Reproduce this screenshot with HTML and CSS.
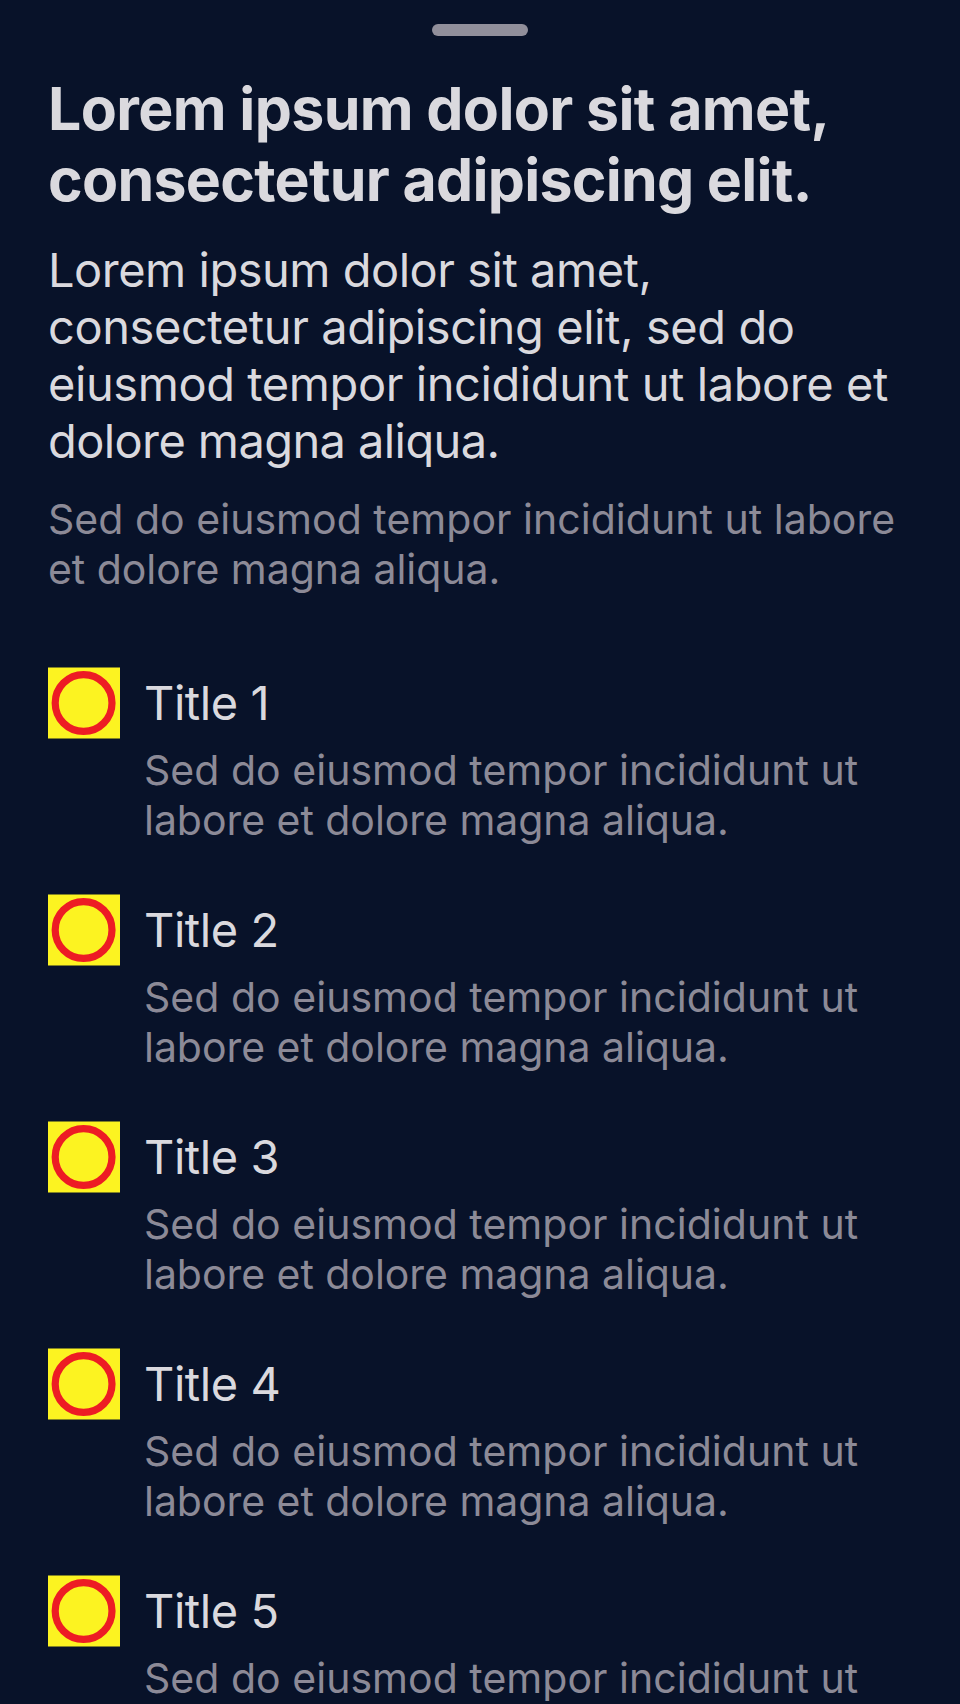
FILE: index.html
```html
<!DOCTYPE html>
<html lang="la">
<head>
<meta charset="utf-8">
<title>Lorem ipsum</title>
<link rel="stylesheet" href="styles.css">
</head>
<body>
<main class="sheet">
  <div class="grabber"></div>
  <h1 class="heading"><span class="wide">Lorem ipsum dolor sit amet,</span><br>consectetur adipiscing elit.</h1>
  <p class="lead"><span class="lead-first">Lorem ipsum dolor sit amet,</span><br>consectetur adipiscing elit, sed do<br>eiusmod tempor incididunt ut labore et<br><span class="lead-last">dolore magna aliqua.</span></p>
  <p class="note">Sed do eiusmod tempor incididunt ut labore<br><span class="tight">et dolore magna aliqua.</span></p>
  <ul class="list">
    <li class="item"><svg class="icon" viewBox="0 0 72 72"><rect y="0.5" width="72" height="71"/><circle cx="35.6" cy="36" r="28.4"/></svg><div><h2 class="title">Title 1</h2><p class="text">Sed do eiusmod tempor incididunt ut<br><span class="tight">labore et dolore magna aliqua.</span></p></div></li>
    <li class="item"><svg class="icon" viewBox="0 0 72 72"><rect y="0.5" width="72" height="71"/><circle cx="35.6" cy="36" r="28.4"/></svg><div><h2 class="title">Title 2</h2><p class="text">Sed do eiusmod tempor incididunt ut<br><span class="tight">labore et dolore magna aliqua.</span></p></div></li>
    <li class="item"><svg class="icon" viewBox="0 0 72 72"><rect y="0.5" width="72" height="71"/><circle cx="35.6" cy="36" r="28.4"/></svg><div><h2 class="title">Title 3</h2><p class="text">Sed do eiusmod tempor incididunt ut<br><span class="tight">labore et dolore magna aliqua.</span></p></div></li>
    <li class="item"><svg class="icon" viewBox="0 0 72 72"><rect y="0.5" width="72" height="71"/><circle cx="35.6" cy="36" r="28.4"/></svg><div><h2 class="title">Title 4</h2><p class="text">Sed do eiusmod tempor incididunt ut<br><span class="tight">labore et dolore magna aliqua.</span></p></div></li>
    <li class="item"><svg class="icon" viewBox="0 0 72 72"><rect y="0.5" width="72" height="71"/><circle cx="35.6" cy="36" r="28.4"/></svg><div><h2 class="title">Title 5</h2><p class="text">Sed do eiusmod tempor incididunt ut</p></div></li>
  </ul>
</main>
</body>
</html>
```
FILE: styles.css
```css
* { box-sizing: border-box; margin: 0; padding: 0; }
body { background: #081229; font-family: Inter, "Liberation Sans", sans-serif; }
.sheet { height: 1704px; overflow: hidden; padding: 24px 48px 0; white-space: nowrap; }
.grabber { width: 96px; height: 12px; margin: 0 auto; border-radius: 6px; background: #918f9b; }
.heading { margin-top: 37px; font-size: 59px; line-height: 71px; font-weight: 700; letter-spacing: -0.72px; color: #dad9de; }
.wide { letter-spacing: -0.63px; }
.lead { margin-top: 26px; font-size: 47px; line-height: 57px; letter-spacing: -0.42px; color: #dad9de; }
.lead-first { letter-spacing: -0.49px; }
.lead-last { letter-spacing: -0.6px; }
.note { margin-top: 25px; font-size: 41px; line-height: 50px; letter-spacing: 0.03px; color: #8c8a97; }
.tight { letter-spacing: -0.04px; }
.list { margin-top: 73px; list-style: none; }
.item { display: flex; gap: 24px; height: 227px; }
.icon { flex: none; width: 72px; height: 72px; }
.icon rect { fill: #fcf321; }
.icon circle { fill: none; stroke: #ed1c24; stroke-width: 7.2; }
.title { font-size: 47px; line-height: 71px; font-weight: 400; letter-spacing: -0.45px; color: #dad9de; }
.text { margin-top: 7px; font-size: 41px; line-height: 50px; letter-spacing: 0.03px; color: #8c8a97; }
```
